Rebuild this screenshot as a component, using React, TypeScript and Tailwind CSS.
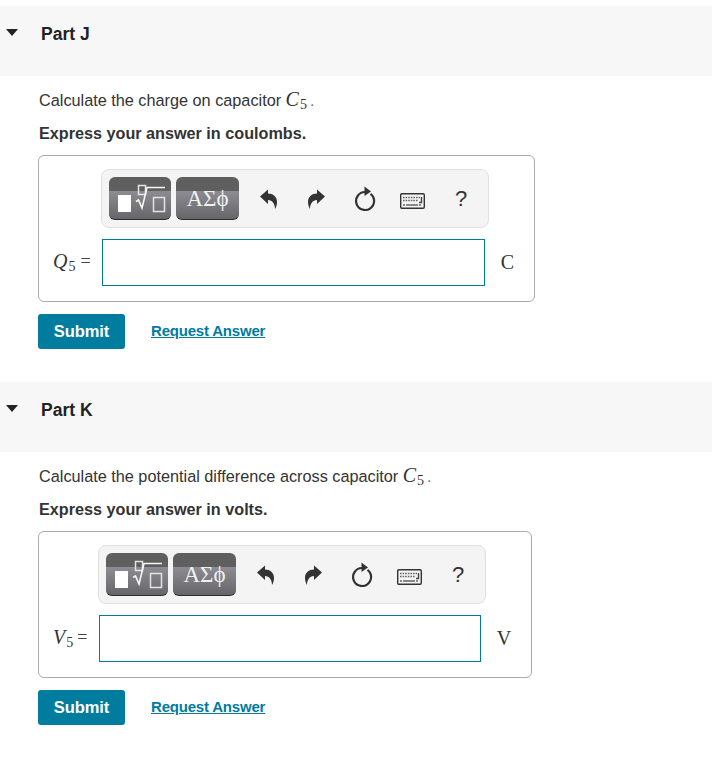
const sans = { fontFamily: '"Liberation Sans", Arial, sans-serif' };

function MathVar({ letter }: { letter: string }) {
  return (
    <span className="font-['Liberation_Serif',serif] text-[#333]">
      <span className="italic text-[20px]">{letter}</span>
      <span className="text-[14px] relative top-[3px] ml-px">5</span>
    </span>
  );
}

function ToolButtons() {
  return (
    <div className="flex gap-[5px]">
      {/* templates */}
      <div className="w-[62px] h-[43px] rounded-[6px] border-b border-[#2a2a2a] bg-[linear-gradient(#5f5f5f_0,#5f5f5f_14px,#8c8c92_14px,#66666a_100%)] overflow-hidden">
        <svg className="block" width="62" height="43" viewBox="0 0 62 43" fill="none">
          <rect x="9" y="18" width="13" height="17" fill="#fff" />
          <rect x="29.5" y="8.5" width="7" height="9" stroke="#e4e4e4" strokeWidth="1.5" />
          <path d="M27 24.5 L29.5 23 L33 31 L38 10.5 H56" stroke="#f6f6f6" strokeWidth="1.6" />
          <rect x="44.5" y="20.5" width="11" height="14" stroke="#e4e4e4" strokeWidth="1.5" />
        </svg>
      </div>
      {/* greek */}
      <div className="w-[63px] h-[43px] rounded-[6px] border-b border-[#2a2a2a] bg-[linear-gradient(#5f5f5f_0,#5f5f5f_14px,#8c8c92_14px,#66666a_100%)] flex items-center justify-center font-['Liberation_Serif',serif] text-[23px] leading-none text-[#f0f0f0]">
        ΑΣϕ
      </div>
    </div>
  );
}

function UndoIcon({ flip }: { flip?: boolean }) {
  return (
    <svg className={flip ? "block -scale-x-100" : "block"} width="17" height="20" viewBox="0 0 17 20">
      <path d="M0 7.5 L8 0.5 V4.5 C13 4.5 17 7.5 17 13 C17 16 16 18.5 15 20 C15 15 12.5 11 8 11 V15 Z" fill="#333" />
    </svg>
  );
}

function ReloadIcon() {
  return (
    <svg className="block" width="22" height="25" viewBox="0 0 22 25" fill="none">
      <path d="M11 6 A9 9 0 1 0 16.5 7.8" stroke="#333" strokeWidth="2.2" />
      <path d="M10.5 0.5 L17 5.5 L10.5 10 Z" fill="#333" />
    </svg>
  );
}

function KeyboardIcon() {
  return (
    <svg className="block" width="25" height="16" viewBox="0 0 25 16" fill="none">
      <rect x="0.7" y="0.7" width="23.6" height="14.6" rx="1.2" stroke="#333" strokeWidth="1.4" />
      <path d="M3 4.5 H20" stroke="#666" strokeWidth="1.5" strokeDasharray="1.6 1" />
      <path d="M3 7.5 H18" stroke="#666" strokeWidth="1.5" strokeDasharray="1.6 1" />
      <path d="M3 12 H22" stroke="#666" strokeWidth="1.5" strokeDasharray="2 1 12 1" />
      <path d="M21.5 4 V9.5 H19" stroke="#444" strokeWidth="1.4" />
    </svg>
  );
}

function Toolbar({ ml }: { ml: string }) {
  return (
    <div className={`${ml} w-[388px] h-[59px] rounded-[8px] border border-[#e0e0e0] bg-[#f4f4f4] pl-[7px] flex items-center`}>
      <ToolButtons />
      <div className="ml-[21px]">
        <UndoIcon />
      </div>
      <div className="ml-[31px]">
        <UndoIcon flip />
      </div>
      <div className="ml-[29px] -mt-[1px]">
        <ReloadIcon />
      </div>
      <div className="ml-[24px] mt-[4px]">
        <KeyboardIcon />
      </div>
      <div className="ml-[30px] text-[22px] leading-none text-[#333]" style={sans}>?</div>
    </div>
  );
}

type PartProps = {
  part: string;
  question: string;
  express: string;
  letter: string;
  unit: string;
  cardW: string;
  toolbarMl: string;
  labelW: string;
  inputW: string;
  labelGap: string;
  first?: boolean;
};

function Part({ part, question, express, letter, unit, cardW, toolbarMl, labelW, inputW, labelGap, first }: PartProps) {
  return (
    <section className={first ? "" : "mt-[33px]"}>
      <div className="h-[70px] bg-[#f7f7f7] relative pl-[41px] pt-[16px] text-[17.5px] leading-6 font-bold text-[#222]">
        <span className="absolute left-[6px] top-[23px] w-0 h-0 border-l-[6.5px] border-r-[6.5px] border-t-[7px] border-l-transparent border-r-transparent border-t-[#222]" />
        {part}
      </div>
      <div className="pl-[38px]">
        <p className="mt-[11px] h-6 leading-6 text-[16.25px] text-[#333] pl-px">
          {question} <MathVar letter="C" /><span className="ml-[3px] text-[#777]">.</span>
        </p>
        <p className="mt-[10px] h-6 leading-6 text-[16.2px] font-bold text-[#333] pl-px">{express}</p>
        <div className={`${cardW} mt-[10px] h-[147px] rounded-[6px] border border-[#aaa] pt-[13px]`}>
          <Toolbar ml={toolbarMl} />
          <div className="mt-[11px] flex items-center">
            <div className={`${labelW} pl-[14px] -mt-[3px] flex items-center`}>
              <MathVar letter={letter} />
              <span className={`${labelGap} font-['Liberation_Serif',serif] text-[18px] text-[#444]`}>=</span>
            </div>
            <div className={`${inputW} h-[47px] border border-[#007b9a] bg-white`} />
            <div className="flex-1 text-center pr-[4px] -mt-[2px] font-['Liberation_Serif',serif] text-[20px] text-[#333]">{unit}</div>
          </div>
        </div>
        <div className="mt-[12px] flex items-center">
          <button className="w-[87px] h-[35px] rounded-[3px] bg-[#007c9e] text-white text-[16.5px] font-bold tracking-[-0.1px]">
            Submit
          </button>
          <a className="ml-[26px] text-[15px] font-bold tracking-[-0.2px] text-[#007c9e] underline">Request Answer</a>
        </div>
      </div>
    </section>
  );
}

export default function App() {
  return (
    <div className="w-[712px] h-[778px] bg-white pt-[6px] overflow-hidden" style={sans}>
      <Part
        first
        part="Part J"
        question="Calculate the charge on capacitor"
        express="Express your answer in coulombs."
        letter="Q"
        unit="C"
        cardW="w-[497px]"
        toolbarMl="ml-[62px]"
        labelW="w-[63px]"
        inputW="w-[383px]"
        labelGap="ml-[5px]"
      />
      <Part
        part="Part K"
        question="Calculate the potential difference across capacitor"
        express="Express your answer in volts."
        letter="V"
        unit="V"
        cardW="w-[494px]"
        toolbarMl="ml-[59px]"
        labelW="w-[60px]"
        inputW="w-[382px]"
        labelGap="ml-[4px]"
      />
    </div>
  );
}
